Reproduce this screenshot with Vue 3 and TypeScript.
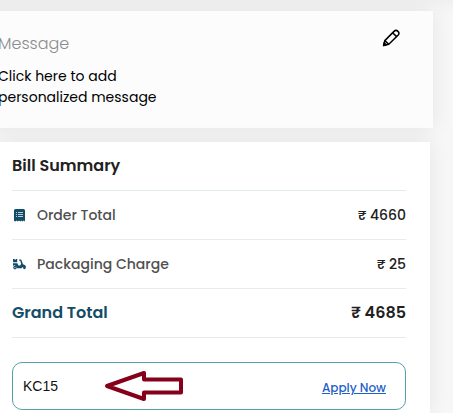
<script setup lang="ts">
import { ref } from 'vue'

interface Charge {
  icon: 'receipt' | 'scooter'
  label: string
  amount: number
}

const charges: Charge[] = [
  { icon: 'receipt', label: 'Order Total', amount: 4660 },
  { icon: 'scooter', label: 'Packaging Charge', amount: 25 },
]
const total = charges.reduce((sum, charge) => sum + charge.amount, 0)
const coupon = ref('KC15')
</script>

<template>
  <main class="page">
    <section class="card message">
      <div>
        <h2 class="message-title">Message</h2>
        <p class="message-text">Click here to add<br />personalized message</p>
      </div>
      <button class="edit" type="button" aria-label="Edit message">
        <svg width="20" height="20" viewBox="0 0 20 20" fill="none" stroke="#000" stroke-width="1.5" stroke-linejoin="round">
          <path d="M2.6 17.4 L3.8 12.6 L13 3.4 Q15 1.4 17 3.4 Q19 5.2 17 7.2 L7.8 16.2 Z" />
          <path d="M11.6 4.8 L15.6 8.6 M3.8 12.6 L7.8 16.2" />
          <path d="M2.6 17.4 L3.2 14.8 L5.2 16.8 Z" fill="#000" />
        </svg>
      </button>
    </section>

    <section class="card bill">
      <h2 class="bill-title">Bill Summary</h2>
      <dl class="rows">
        <div v-for="charge in charges" :key="charge.label" class="row">
          <dt class="label">
            <svg v-if="charge.icon === 'receipt'" class="icon" viewBox="0 0 15 15">
              <path d="M3.5 1 H11.5 Q13 1 13 2.5 V13.4 L11.8 12.6 L10.6 13.6 L9.4 12.6 L8.2 13.6 L7 12.6 L5.8 13.6 L4.6 12.6 L3.4 13.6 L2 12.8 V2.5 Q2 1 3.5 1 Z" fill="#124c66" />
              <path d="M4 4.5 H5 M4 6.5 H5 M4 8.5 H5 M6 4.5 H11 M6 6.5 H11 M6 8.5 H11" stroke="#b9cdd6" />
            </svg>
            <svg v-else class="icon" viewBox="0 0 15 15" fill="#124c66">
              <path d="M1 2 H2.4 L3.2 3 L4 2 H5.2 V5.2 H1 Z" />
              <path d="M1 6.2 H5.4 L6.4 8.6 H8 L9.2 7 L8.2 3.8 H7.2 V2.6 H9.2 L11 7.2 Q13.8 7.6 14 10 H10.8 L9.6 11.2 H5 Q4.8 8.8 3 8.4 Q1.6 8.2 1 9 Z" />
              <circle cx="3" cy="10.6" r="1.2" fill="none" stroke="#124c66" stroke-width="1.2" />
              <circle cx="12.4" cy="10.8" r="1.4" />
            </svg>
            {{ charge.label }}
          </dt>
          <dd class="amount">₹ {{ charge.amount }}</dd>
        </div>
        <div class="row total">
          <dt class="label">Grand Total</dt>
          <dd class="amount">₹ {{ total }}</dd>
        </div>
      </dl>
      <form class="coupon" @submit.prevent>
        <input v-model="coupon" class="code" type="text" aria-label="Coupon code" />
        <button class="apply" type="submit">Apply Now</button>
        <svg class="arrow" width="80" height="32" viewBox="0 0 80 32" fill="none" stroke="#85001b" stroke-width="4" stroke-linejoin="round">
          <path d="M3 16 L40 3 V9.5 H77 V22.5 H40 V29 Z" />
        </svg>
      </form>
    </section>
  </main>
</template>

<style>
body {
  background: #f7f7f7;
}
</style>

<style scoped>
.page {
  box-sizing: border-box;
  min-height: 100vh;
  padding: 11px 20px 0 0;
  overflow: hidden;
  display: flex;
  flex-direction: column;
  gap: 14px;
  font-family: Poppins, Inter, "Noto Sans", sans-serif;
  color: #212121;
  box-shadow: inset 0 20px 20px -20px rgba(0, 0, 0, 0.06);
}
h2,
p,
dl,
dd {
  margin: 0;
}
.card {
  box-shadow: 0 0 20px rgba(0, 0, 0, 0.08);
}
.message {
  display: flex;
  justify-content: space-between;
  align-items: flex-start;
  margin-left: -16px;
  padding: 21px 32px 20px 14px;
  background: #fcfcfc;
}
.message-title {
  margin-bottom: 10px;
  font-size: 16px;
  font-weight: 300;
  line-height: 24px;
  color: #8c8c8c;
}
.message-text {
  font-size: 14px;
  line-height: 21px;
  color: #000;
}
.edit {
  display: flex;
  margin-top: -4px;
  padding: 0;
  border: 0;
  background: none;
}
.bill {
  flex: 1;
  position: relative;
  margin-right: 3px;
  padding: 0 24px 3px 12px;
  background: #fff;
}
.bill-title {
  border-bottom: 1px solid #e1ebf0;
  font-size: 16px;
  font-weight: 600;
  line-height: 48px;
}
.row {
  display: flex;
  justify-content: space-between;
  border-bottom: 1px solid #e6ebed;
  font-size: 14px;
  font-weight: 500;
  line-height: 48px;
}
.label {
  display: flex;
  align-items: center;
  gap: 10px;
  color: #4f4f4f;
}
.icon {
  width: 15px;
  height: 15px;
}
.total {
  font-size: 16px;
  font-weight: 600;
}
.total .label {
  color: #124c66;
}
.coupon {
  box-sizing: border-box;
  position: relative;
  display: flex;
  align-items: center;
  justify-content: space-between;
  height: 48px;
  margin-top: 24px;
  padding: 0 19px 0 10px;
  border: 1px solid #5a9ea6;
  border-radius: 10px;
}
.code {
  flex: 1;
  min-width: 0;
  padding: 0;
  border: 0;
  outline: 0;
  background: none;
  font: 14px "Liberation Sans", Arial, sans-serif;
  color: #111;
}
.apply {
  padding: 4px 0 0;
  border: 0;
  background: none;
  font: 500 12px Poppins, Inter, "Noto Sans", sans-serif;
  color: #1f5fc9;
  text-decoration: underline;
}
.arrow {
  position: absolute;
  left: 91px;
  top: 7px;
}
</style>
